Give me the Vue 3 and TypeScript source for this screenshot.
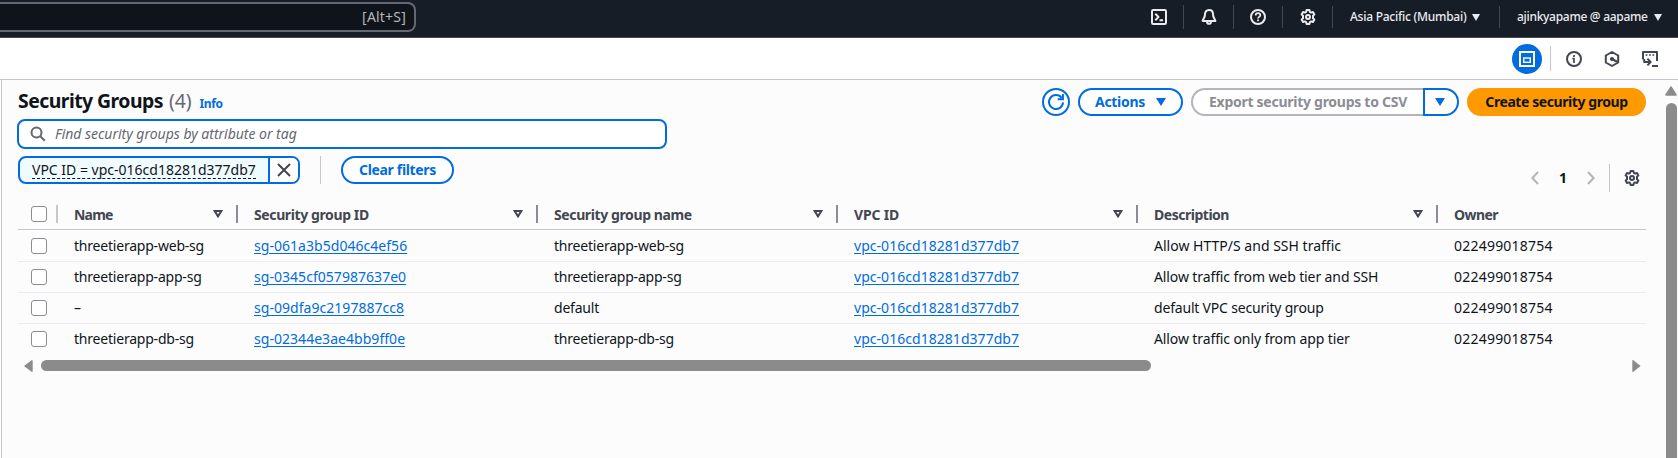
<script setup lang="ts">
interface Row {
  name: string
  id: string
  group: string
  desc: string
  descCls: string
}

interface Column {
  label: string
  cls: string
  sortable: boolean
}

const vpcId = 'vpc-016cd18281d377db7'
const ownerId = '022499018754'

const columns: Column[] = [
  { label: 'Name', cls: 'h-name', sortable: true },
  { label: 'Security group ID', cls: 'h-id', sortable: true },
  { label: 'Security group name', cls: 'h-id', sortable: true },
  { label: 'VPC ID', cls: 'h-vpc', sortable: true },
  { label: 'Description', cls: 'h-desc', sortable: true },
  { label: 'Owner', cls: 'h-owner', sortable: false },
]

const rows: Row[] = [
  { name: 'threetierapp-web-sg', id: 'sg-061a3b5d046c4ef56', group: 'threetierapp-web-sg', desc: 'Allow HTTP/S and SSH traffic', descCls: 'wide' },
  { name: 'threetierapp-app-sg', id: 'sg-0345cf057987637e0', group: 'threetierapp-app-sg', desc: 'Allow traffic from web tier and SSH', descCls: '' },
  { name: '–', id: 'sg-09dfa9c2197887cc8', group: 'default', desc: 'default VPC security group', descCls: 'tight' },
  { name: 'threetierapp-db-sg', id: 'sg-02344e3ae4bb9ff0e', group: 'threetierapp-db-sg', desc: 'Allow traffic only from app tier', descCls: '' },
]

const gearPath =
  'M6.6 1h2.8l.5 1.9 1.2.7 1.9-.6 1.4 2.4L13 6.8v2.4l1.4 1.4-1.4 2.4-1.9-.6-1.2.7L9.4 15H6.6l-.5-1.9-1.2-.7-1.9.6-1.4-2.4L3 9.2V6.8L1.6 5.4 3 3l1.9.6 1.2-.7z'
</script>

<template>
  <div class="page">
    <header class="topbar">
      <div class="top-search"><span>[Alt+S]</span></div>
      <nav class="top-nav">
        <div class="cell w-term">
          <svg width="16" height="16" viewBox="0 0 16 16" class="ic light">
            <rect x="1" y="1" width="14" height="14" rx="1.2" />
            <path d="M4.3 4.8 7.5 8l-3.2 3.2M8.5 11.2h3.6" />
          </svg>
        </div>
        <i class="sep tall"></i>
        <div class="cell w-bell">
          <svg width="16" height="16" viewBox="0 0 16 16" class="ic light">
            <path d="M8 1C5.4 1 4 2.9 4 5.2 4 8.6 2.4 9.6 1.6 11.9h12.8C13.6 9.6 12 8.6 12 5.2 12 2.9 10.6 1 8 1z" />
            <path d="M6 12.4c0 1.6.7 2.4 2 2.4s2-.8 2-2.4" />
          </svg>
        </div>
        <i class="sep tall"></i>
        <div class="cell w-help">
          <svg width="16" height="16" viewBox="0 0 16 16" class="ic light">
            <circle cx="8" cy="8" r="7" />
            <path d="M5.7 6.4C5.7 5 6.7 4.2 8 4.2s2.3.8 2.3 2c0 1.6-2.3 1.7-2.3 3.3M8 10.6v1.7" stroke-width="1.8" />
          </svg>
        </div>
        <i class="sep"></i>
        <div class="cell w-gear">
          <svg width="16" height="16" viewBox="0 0 16 16" class="ic light">
            <path :d="gearPath" />
            <circle cx="8" cy="8" r="2" />
          </svg>
        </div>
        <i class="sep"></i>
        <div class="menu region">
          <span>Asia Pacific (Mumbai)</span>
          <svg width="8" height="7" viewBox="0 0 8 7"><path d="M0 0h8L4 7z" fill="#ebebf0" /></svg>
        </div>
        <i class="sep"></i>
        <div class="menu account">
          <span>ajinkyapame @ aapame</span>
          <svg width="8" height="7" viewBox="0 0 8 7"><path d="M0 0h8L4 7z" fill="#ebebf0" /></svg>
        </div>
      </nav>
    </header>

    <div class="toolbar">
      <button class="panel-btn">
        <svg width="16" height="16" viewBox="0 0 16 16" fill="none" stroke="#fff" stroke-width="2">
          <rect x="1" y="1" width="14" height="14" />
          <rect x="4.7" y="7" width="6.6" height="4.3" stroke-width="1.4" />
        </svg>
      </button>
      <i class="tool-sep"></i>
      <svg width="16" height="16" viewBox="0 0 16 16" class="ic dark t-info">
        <circle cx="8" cy="8" r="7" />
        <path d="M6.3 7.5H8V12M8 4v2" stroke-width="1.7" />
      </svg>
      <svg width="16" height="16" viewBox="0 0 16 16" class="ic dark t-hex">
        <path d="M8 1l6.2 3.5v7L8 15l-6.2-3.5v-7z" />
        <circle cx="8" cy="8" r="1.3" fill="#424650" stroke-width="1.6" />
        <path d="M8 8l5.6 3" />
      </svg>
      <svg width="16" height="16" viewBox="0 0 16 16" class="ic dark t-shell">
        <path d="M1 8.5V1h14v9M10 15h6" />
        <path d="M3.6 4h1.8M7 4h1.8M10.4 4h1.8" stroke-width="1.6" />
        <path d="M2.2 8v3h5.6M5.4 7.6 8.6 11l-3.2 3.4" />
      </svg>
    </div>

    <div class="body">
      <main class="content">
        <section class="head">
          <h1>Security Groups<span class="count">(4)</span><a class="info">Info</a></h1>
          <div class="actions">
            <button class="btn round">
              <svg width="18" height="18" viewBox="0 0 18 18" fill="none" stroke="#006ce0" stroke-width="2">
                <path d="M16 9.4A7 7 0 1 1 14.6 4.8" />
                <path d="M15.9 1v5.2h-5.2" />
              </svg>
            </button>
            <button class="btn act">
              <span>Actions</span>
              <svg width="10" height="8" viewBox="0 0 10 8"><path d="M0 0h10L5 8z" fill="#006ce0" /></svg>
            </button>
            <div class="split">
              <button class="btn export"><span>Export security groups to CSV</span></button>
              <button class="btn more">
                <svg width="10" height="8" viewBox="0 0 10 8"><path d="M0 0h10L5 8z" fill="#006ce0" /></svg>
              </button>
            </div>
            <button class="btn create"><span>Create security group</span></button>
          </div>
        </section>

        <div class="search">
          <svg width="16" height="16" viewBox="0 0 16 16" fill="none" stroke="#656871" stroke-width="2">
            <circle cx="6.5" cy="6.5" r="5" />
            <path d="M10 10l4.8 4.8" />
          </svg>
          <span>Find security groups by attribute or tag</span>
        </div>

        <section class="filters">
          <div class="token">
            <div class="token-text"><span>VPC ID = vpc-016cd18281d377db7</span></div>
            <div class="token-x">
              <svg width="14" height="14" viewBox="0 0 14 14"><path d="M1 1l12 12M13 1 1 13" stroke="#424650" stroke-width="2" /></svg>
            </div>
          </div>
          <i class="filter-sep"></i>
          <button class="btn clear"><span>Clear filters</span></button>
          <div class="pager">
            <svg width="8" height="14" viewBox="0 0 8 14" class="chev"><path d="M7 1 1.4 7 7 13" /></svg>
            <b>1</b>
            <svg width="8" height="14" viewBox="0 0 8 14" class="chev"><path d="M1 1l5.6 6L1 13" /></svg>
            <i class="pager-sep"></i>
            <svg width="16" height="16" viewBox="0 0 16 16" class="ic dark">
              <path :d="gearPath" />
              <circle cx="8" cy="8" r="2" />
            </svg>
          </div>
        </section>

        <div class="table">
          <div class="tr th">
            <div class="check"><i class="box"></i><i class="grip first"></i></div>
            <div v-for="c in columns" :key="c.label" class="hcell">
              <span :class="c.cls">{{ c.label }}</span>
              <template v-if="c.sortable">
                <svg width="10" height="8" viewBox="0 0 10 8" class="sort"><path d="M1.6 1h6.8L5 6.4z" /></svg>
                <i class="grip"></i>
              </template>
            </div>
          </div>
          <div v-for="r in rows" :key="r.id" class="tr">
            <div class="check"><i class="box"></i></div>
            <div class="name">{{ r.name }}</div>
            <div class="gid"><a>{{ r.id }}</a></div>
            <div class="name">{{ r.group }}</div>
            <div class="gid"><a>{{ vpcId }}</a></div>
            <div class="desc" :class="r.descCls">{{ r.desc }}</div>
            <div class="owner">{{ ownerId }}</div>
          </div>
        </div>

        <div class="hscroll">
          <svg width="9" height="12" viewBox="0 0 9 12"><path d="M8 .8v10.4L1 6z" /></svg>
          <i class="thumb"></i>
          <svg width="9" height="12" viewBox="0 0 9 12" class="right"><path d="M1 .8v10.4L7.6 6z" /></svg>
        </div>
      </main>
      <aside class="vscroll">
        <svg width="12" height="10" viewBox="0 0 12 10"><path d="M.9 9h10.2L6 1z" /></svg>
        <i></i>
      </aside>
    </div>
  </div>
</template>

<style>
body {
  overflow: hidden;
}
</style>

<style scoped>
* {
  box-sizing: border-box;
}
.page {
  width: 1678px;
  height: 458px;
  display: flex;
  flex-direction: column;
  overflow: hidden;
  background: #fff;
  color: #0f141a;
  font: 14px/20px 'Noto Sans', 'Open Sans', sans-serif;
}
svg {
  display: block;
  flex: none;
}
i {
  display: block;
  flex: none;
}
span,
a {
  white-space: nowrap;
}
.ic {
  fill: none;
  stroke-width: 2;
  stroke-linejoin: round;
}
.light {
  stroke: #ebebf0;
}
.dark {
  stroke: #424650;
}

.topbar {
  flex: none;
  height: 38px;
  display: flex;
  justify-content: space-between;
  background: #161d26;
  border-bottom: 1px solid #424650;
}
.top-search {
  width: 416px;
  height: 30px;
  margin-top: 2px;
  padding-right: 8px;
  display: flex;
  align-items: center;
  justify-content: flex-end;
  background: #0f141a;
  border: 2px solid #656871;
  border-left: 0;
  border-radius: 0 8px 8px 0;
  color: #b4b4bb;
  letter-spacing: 0.2px;
}
.top-nav {
  display: flex;
  align-items: center;
  height: 34px;
  color: #ebebf0;
  font-size: 12px;
  font-weight: 500;
}
.cell {
  display: flex;
  justify-content: center;
}
.w-term,
.w-help {
  width: 48px;
}
.w-bell,
.w-gear {
  width: 49px;
}
.sep {
  width: 1px;
  height: 22px;
  background: #424650;
}
.sep.tall {
  height: 24px;
}
.menu {
  display: flex;
  align-items: center;
}
.region {
  width: 166px;
  padding-left: 17px;
  letter-spacing: -0.25px;
}
.region svg {
  margin-left: 6px;
}
.account {
  width: 178px;
  padding-left: 17px;
  letter-spacing: -0.3px;
}
.account svg {
  margin-left: 6px;
}

.toolbar {
  flex: none;
  height: 42px;
  padding-right: 20px;
  display: flex;
  align-items: center;
  justify-content: flex-end;
  border-bottom: 1px solid #c6c6cd;
}
.panel-btn {
  width: 30px;
  height: 30px;
  padding: 0;
  display: flex;
  align-items: center;
  justify-content: center;
  border: 0;
  border-radius: 50%;
  background: #006ce0;
}
.tool-sep {
  width: 1px;
  height: 25px;
  margin: 0 15px 0 8px;
  background: #c6c6cd;
}
.t-hex {
  margin: 0 22px;
}

.body {
  flex: 1;
  margin-left: 1px;
  display: flex;
  border-left: 1px solid #c6c6cd;
  background: #fcfcfd;
}
.content {
  width: 1628px;
  margin-left: 16px;
  margin-right: 18px;
  flex: none;
}
.head {
  padding-top: 8px;
  display: flex;
  justify-content: space-between;
}
h1 {
  margin: 0;
  display: flex;
  align-items: baseline;
  font-size: 19.4px;
  line-height: 28px;
  font-weight: 700;
  letter-spacing: -0.53px;
  color: #0f141a;
  height: 28px;
  margin-top: -1px;
}
.count {
  margin-left: 6px;
  font-weight: 400;
  letter-spacing: -0.1px;
  color: #656871;
}
.info {
  margin-left: 8px;
  font-size: 12px;
  font-weight: 700;
  letter-spacing: -0.3px;
  color: #006ce0;
}
.actions {
  display: flex;
  gap: 8px;
}
.btn {
  height: 28px;
  padding: 0;
  display: flex;
  align-items: center;
  justify-content: center;
  background: #fff;
  border: 2px solid #006ce0;
  border-radius: 14px;
  color: #006ce0;
  font: 700 14px/20px 'Noto Sans', 'Open Sans', sans-serif;
}
.round {
  width: 28px;
}
.act {
  width: 105px;
  gap: 11px;
  letter-spacing: -0.3px;
}
.split {
  display: flex;
}
.export {
  width: 232px;
  border-color: #b4b4bb;
  border-right: 0;
  border-radius: 14px 0 0 14px;
  color: #8c8c94;
  letter-spacing: -0.27px;
}
.more {
  width: 36px;
  padding-right: 3px;
  border-radius: 0 14px 14px 0;
}
.create {
  width: 179px;
  background: #ff9900;
  border-color: #ff9900;
  color: #0f141a;
  letter-spacing: -0.42px;
}

.search {
  width: 650px;
  height: 30px;
  margin: 3px 0 0 -1px;
  padding-left: 11px;
  display: flex;
  align-items: center;
  gap: 9px;
  background: #fff;
  border: 2px solid #006ce0;
  border-radius: 8px;
  color: #656871;
  font-style: italic;
  letter-spacing: -0.02px;
}

.filters {
  display: flex;
  align-items: flex-start;
  height: 50px;
  padding-top: 7px;
}
.token {
  width: 282px;
  height: 28px;
  display: flex;
  background: #f0fbff;
  border: 2px solid #006ce0;
  border-radius: 8px;
  overflow: hidden;
}
.token-text {
  width: 248px;
  padding: 2px 0 0 12px;
}
.token-text span {
  display: inline-block;
  line-height: 19px;
  height: 19px;
  border-bottom: 1px dashed #0f141a;
}
.token-x {
  flex: 1;
  padding-right: 1px;
  display: flex;
  align-items: center;
  justify-content: center;
  border-left: 2px solid #006ce0;
  background: #fff;
}
.filter-sep {
  width: 1px;
  height: 28px;
  margin: 0 20px;
  background: #c6c6cd;
}
.clear {
  width: 113px;
  letter-spacing: -0.33px;
}
.pager {
  margin: 8px 6px 0 auto;
  height: 28px;
  display: flex;
  align-items: center;
}
.chev {
  fill: none;
  stroke: #b4b4bb;
  stroke-width: 2;
}
.pager b {
  width: 48px;
  text-align: center;
}
.pager-sep {
  width: 1px;
  height: 28px;
  margin: 0 14px;
  background: #c6c6cd;
}

.tr {
  display: grid;
  grid-template-columns: 56px 180px 300px 300px 300px 300px 192px;
  align-items: center;
  height: 31px;
  border-bottom: 1px solid #ebebf0;
}
.tr:nth-child(2) {
  height: 32px;
}
.tr:last-child {
  border-color: transparent;
}
.tr.th {
  height: 31px;
  border-color: #c6c6cd;
}
.check {
  display: flex;
  align-items: center;
  padding-left: 13px;
}
.box {
  width: 16px;
  height: 16px;
  border: 1px solid #8c8c94;
  border-radius: 3px;
  background: #fff;
}
.grip {
  width: 2px;
  height: 18px;
  background: #8c8c94;
}
.grip.first {
  margin-left: 9px;
  background: #c6c6cd;
}
.hcell {
  display: flex;
  align-items: center;
  font-weight: 700;
  color: #424650;
}
.hcell span {
  padding-top: 2px;
}
.hcell .grip {
  margin: 0 16px 0 13px;
}
.sort {
  margin-left: auto;
  fill: none;
  stroke: #424650;
  stroke-width: 2;
}
.h-name {
  letter-spacing: -0.8px;
}
.h-id {
  letter-spacing: -0.39px;
}
.h-vpc {
  letter-spacing: -0.19px;
}
.h-desc {
  letter-spacing: -0.48px;
}
.h-owner {
  letter-spacing: -0.56px;
}
.tr > div {
  white-space: nowrap;
}
.tr a {
  color: #006ce0;
  text-decoration: underline;
  text-decoration-thickness: 1px;
  text-underline-offset: 2px;
}
.name {
  letter-spacing: -0.21px;
}
.gid {
  letter-spacing: 0.04px;
}
.desc {
  letter-spacing: -0.11px;
}
.desc.wide {
  letter-spacing: 0.01px;
}
.desc.tight {
  letter-spacing: -0.19px;
}
.owner {
  letter-spacing: 0.22px;
}

.hscroll {
  display: flex;
  align-items: center;
  height: 12px;
  margin-top: 5px;
  padding-left: 6px;
}
.hscroll svg,
.vscroll svg {
  fill: #8b8b8b;
  stroke: #8b8b8b;
  stroke-width: 1.4;
  stroke-linejoin: round;
}
.hscroll .right {
  margin-left: auto;
  margin-right: 5px;
}
.thumb {
  width: 1110px;
  height: 11px;
  margin: 0 0 1px 8px;
  border-radius: 6px;
  background: #8b8b8b;
}
.vscroll {
  flex: none;
  width: 14px;
  padding-top: 6px;
}
.vscroll svg {
  margin-left: 1px;
}
.vscroll i {
  width: 11px;
  height: 400px;
  margin: 7px 0 0 2px;
  border-radius: 6px;
  background: #8b8b8b;
}
</style>
